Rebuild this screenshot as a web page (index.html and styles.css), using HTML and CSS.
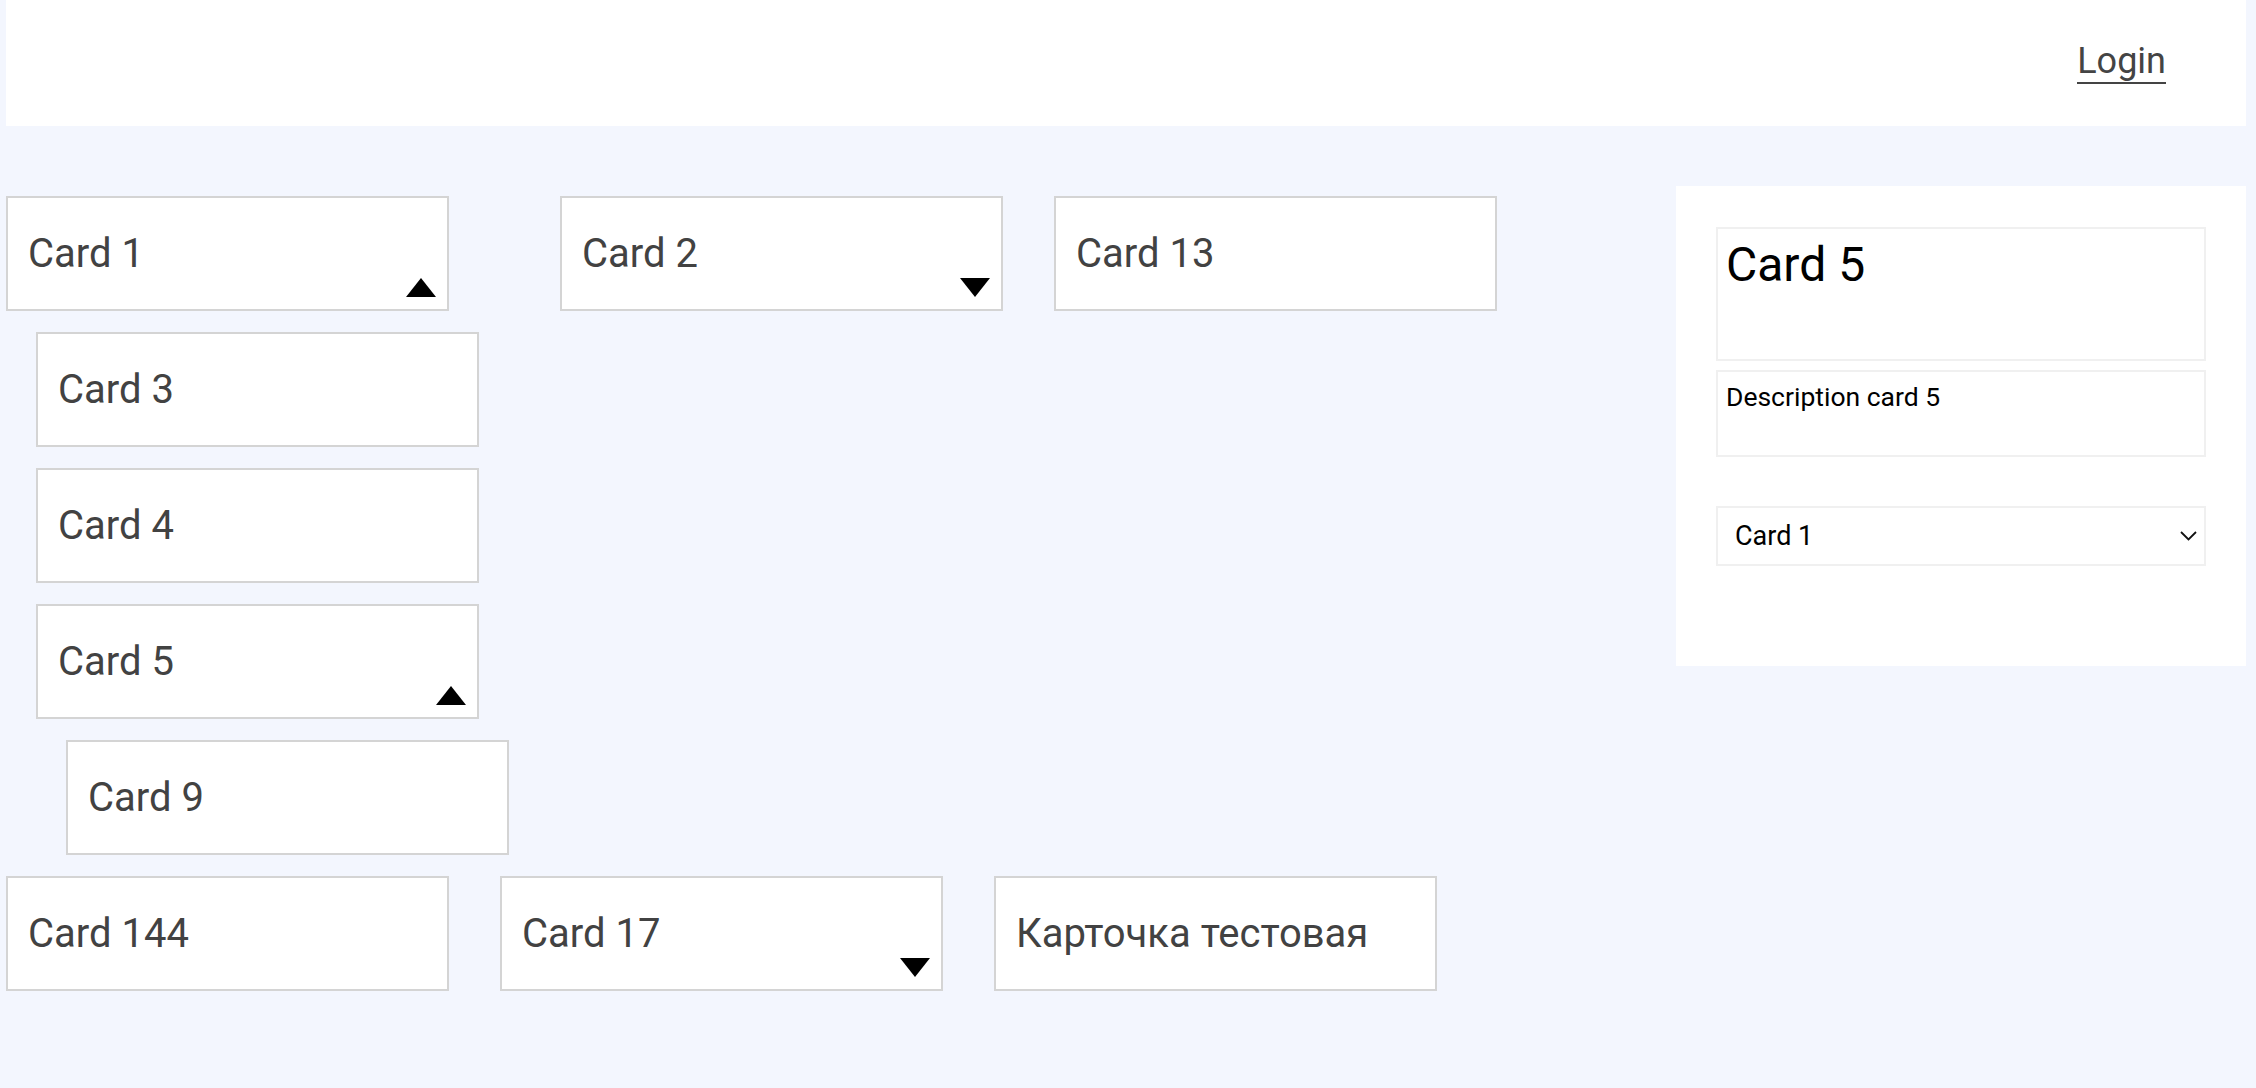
FILE: index.html
```html
<!DOCTYPE html>
<html lang="en">
<head>
<meta charset="utf-8">
<title>Cards</title>
<link rel="stylesheet" href="styles.css">
</head>
<body>
<header class="topbar">
  <a class="login" href="#">Login</a>
</header>
<main class="layout">
  <section class="board">
    <div class="tree">
      <div class="card toggle-up">Card 1</div>
      <div class="children">
        <div class="card">Card 3</div>
        <div class="card">Card 4</div>
        <div class="card toggle-up">Card 5</div>
        <div class="children">
          <div class="card">Card 9</div>
        </div>
      </div>
    </div>
    <div class="card toggle-down">Card 2</div>
    <div class="card">Card 13</div>
    <div class="card">Card 144</div>
    <div class="card toggle-down">Card 17</div>
    <div class="card">Карточка тестовая</div>
  </section>
  <aside class="panel">
    <div class="field title-field">Card 5</div>
    <div class="field desc-field">Description card 5</div>
    <div class="field select-field">
      <span>Card 1</span>
      <svg class="chevron" width="17" height="10" viewBox="0 0 17 10"><polyline points="1,1 8.5,8.5 16,1" fill="none" stroke="#111" stroke-width="1.8"/></svg>
    </div>
  </aside>
</main>
</body>
</html>
```
FILE: styles.css
```css
* { box-sizing: border-box; }

body {
  margin: 0;
  padding: 0 10px 0 6px;
  background: #f3f6fe;
  font-family: Roboto, "Noto Sans", sans-serif;
}

.topbar {
  height: 126px;
  background: #fff;
  display: flex;
  justify-content: flex-end;
  align-items: center;
  padding-right: 80px;
}

.login {
  font-size: 36px;
  color: #444;
  text-decoration: none;
  border-bottom: 2px solid #444;
  margin-bottom: 3px;
}

.layout {
  display: flex;
  align-items: flex-start;
  padding-top: 60px;
}

.board {
  flex: 1;
  margin-top: 10px;
  display: flex;
  flex-wrap: wrap;
  align-items: flex-start;
  align-content: flex-start;
  column-gap: 51px;
  row-gap: 21px;
}

.tree,
.children {
  display: flex;
  flex-direction: column;
  gap: 21px;
}

.children {
  padding-left: 30px;
}

.card {
  position: relative;
  width: 443px;
  height: 115px;
  border: 2px solid #d4d4d4;
  background: #fff;
  display: flex;
  align-items: center;
  padding-left: 20px;
  font-size: 40px;
  color: #424242;
}

.toggle-up::after,
.toggle-down::after {
  content: "";
  position: absolute;
  right: 11px;
  bottom: 12px;
  width: 0;
  height: 0;
  border-left: 15.5px solid transparent;
  border-right: 15.5px solid transparent;
}

.toggle-up::after {
  border-bottom: 19px solid #000;
}

.toggle-down::after {
  border-top: 19px solid #000;
}

.panel {
  width: 570px;
  background: #fff;
  padding: 41px 40px 100px;
  display: flex;
  flex-direction: column;
}

.field {
  border: 2px solid #f0f0f0;
  color: #000;
}

.title-field {
  height: 134px;
  padding: 7px 8px;
  font-size: 48px;
}

.desc-field {
  margin-top: 9px;
  height: 87px;
  padding: 9px 8px;
  font-size: 26.5px;
}

.select-field {
  margin-top: 49px;
  height: 60px;
  padding: 0 7px 0 17px;
  font-size: 27px;
  display: flex;
  align-items: center;
  justify-content: space-between;
}

.chevron {
  display: block;
}
```
